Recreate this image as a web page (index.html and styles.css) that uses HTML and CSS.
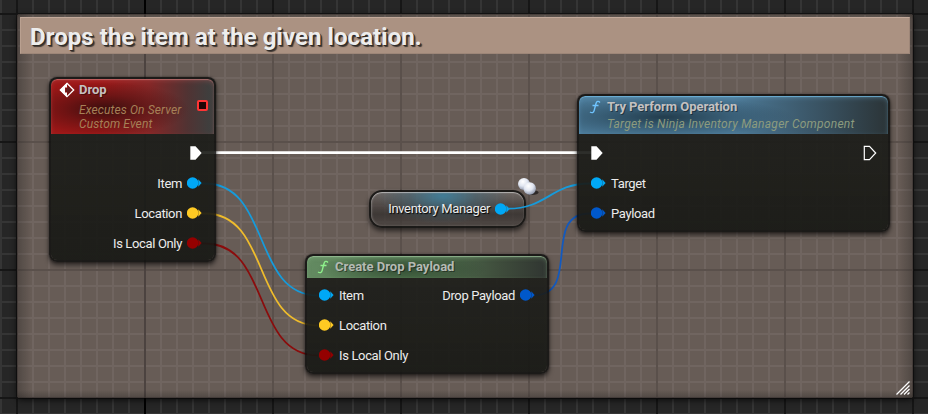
FILE: index.html
```html
<!DOCTYPE html>
<html lang="en">
<head>
<meta charset="utf-8">
<title>Drop event graph</title>
<link rel="stylesheet" href="styles.css">
</head>
<body>
<svg width="0" height="0" class="defs" aria-hidden="true">
  <defs>
    <symbol id="pin" viewBox="0 0 16 16"><circle cx="5.600" cy="8" r="5.800"/><path d="M11.300 4.300 14.600 8l-3.300 3.700z"/></symbol>
    <symbol id="exec" viewBox="0 0 16 16"><path d="M3.300 1.300h5.200L14.700 8l-6.200 6.700H3.300z"/></symbol>
    <symbol id="func" viewBox="0 0 12 14"><path d="M11 2.400C9.500.8 7.600 1 7 3.500L5.200 10.400C4.700 12.800 3 13.200 1 12M3.500 5.500H9.500" fill="none" stroke="currentColor" stroke-width="1.400"/></symbol>
    <radialGradient id="ball" cx=".4" cy=".3" r=".75"><stop offset="0" stop-color="#fff"/><stop offset=".5" stop-color="#e0e5f0"/><stop offset="1" stop-color="#858da2"/></radialGradient>
  </defs>
</svg>
<main class="graph">
  <section class="comment">
    <h1 class="comment-title">Drops the item at the given location.</h1>
    <svg class="grip" width="14" height="14" viewBox="0 0 14 14"><path d="M.5 13.500 13.500.5M4.500 13.500l9-9M8 13.500 13.500 8M11.500 13.500l2-2"/></svg>
  </section>

  <svg class="wires" width="928" height="414" viewBox="0 0 928 414">
    <path class="w-exec" d="M202 152.700H592"/>
    <path class="w-object" d="M201 183.500H205C271 183.500 252 295.500 318 295.500"/>
    <path class="w-vector" d="M201 213.500H205C271 213.500 252 325.500 318 325.500"/>
    <path class="w-bool" d="M201 243.500H205C271 243.500 252 355.500 318 355.500"/>
    <path class="w-struct" d="M533 295.500C583 295.500 540 213.500 590 213.500"/>
  </svg>

  <article class="node drop">
    <header class="head">
      <svg class="event-icon" width="16" height="16" viewBox="0 0 16 16"><path d="M8 1.300 14.700 8 8 14.700 1.300 8z" fill="none" stroke="#fff" stroke-width="1.300"/><path d="M8 1 1 8l7 7v-4.500H6v-5h2z" fill="#fff"/><path d="M7 6h2V3.700L12.500 8 9 12.300V10H7z" fill="#651d1d"/></svg>
      <div class="titles"><h2>Drop</h2><p>Executes On Server<br>Custom Event</p></div>
      <span class="delegate"></span>
    </header>
    <div class="pins">
      <div class="row out"><svg class="pin exec"><use href="#exec"/></svg></div>
      <div class="row out"><span>Item</span><svg class="pin object"><use href="#pin"/></svg></div>
      <div class="row out"><span>Location</span><svg class="pin vector"><use href="#pin"/></svg></div>
      <div class="row out"><span>Is Local Only</span><svg class="pin bool"><use href="#pin"/></svg></div>
    </div>
  </article>

  <article class="node inventory">
    <span>Inventory Manager</span><svg class="pin object"><use href="#pin"/></svg>
  </article>
  <svg class="wires" width="928" height="414" viewBox="0 0 928 414">
    <path class="w-object" d="M508 208.700C547 208.700 551 183.500 590 183.500"/>
  </svg>
  <svg class="balls" width="22" height="20" viewBox="0 0 22 20"><ellipse cx="15" cy="15.500" rx="6.500" ry="2.500" fill="#211d1b" opacity=".8"/><circle cx="7" cy="7" r="6" fill="url(#ball)"/><circle cx="12.700" cy="11.500" r="6.200" fill="url(#ball)"/></svg>

  <article class="node create">
    <header class="head"><svg class="func"><use href="#func"/></svg><h2>Create Drop Payload</h2></header>
    <div class="pins">
      <div class="row"><svg class="pin object"><use href="#pin"/></svg><span>Item</span><span class="push">Drop Payload</span><svg class="pin struct"><use href="#pin"/></svg></div>
      <div class="row"><svg class="pin vector"><use href="#pin"/></svg><span>Location</span></div>
      <div class="row"><svg class="pin bool"><use href="#pin"/></svg><span>Is Local Only</span></div>
    </div>
  </article>

  <article class="node perform">
    <header class="head"><svg class="func"><use href="#func"/></svg><div class="titles"><h2>Try Perform Operation</h2><p>Target is Ninja Inventory Manager Component</p></div></header>
    <div class="pins">
      <div class="row"><svg class="pin exec in"><use href="#exec"/></svg><svg class="pin exec open push"><use href="#exec"/></svg></div>
      <div class="row"><svg class="pin object"><use href="#pin"/></svg><span>Target</span></div>
      <div class="row"><svg class="pin struct"><use href="#pin"/></svg><span>Payload</span></div>
    </div>
  </article>
</main>
</body>
</html>
```
FILE: styles.css
```css
* { box-sizing: border-box; }
body { margin: 0; font-family: Roboto, "Liberation Sans", sans-serif; font-size: 13px; color: #ececec; }
h1, h2, p { margin: 0; }
svg { display: block; flex: none; }
.defs { position: absolute; }

/* Grid: 16px cells, heavier line every eighth cell, black origin axis */
.graph {
  position: relative; width: 928px; height: 414px; overflow: hidden;
  background-color: #262626;
  background-image:
    linear-gradient(#000, #000),
    linear-gradient(90deg, #161616 2px, transparent 2px),
    linear-gradient(#161616 2px, transparent 2px),
    linear-gradient(90deg, #353535 2px, transparent 2px),
    linear-gradient(#353535 2px, transparent 2px);
  background-size: 2px 414px, 128px 128px, 128px 128px, 16px 16px, 16px 16px;
  background-position: 144px 0, 16px 0, 0 13px, 0 0, 0 13px;
  background-repeat: no-repeat, repeat, repeat, repeat, repeat;
}

.comment {
  position: absolute; left: 17px; top: 14px; width: 896px; height: 384px;
  padding: 3px 3px 0; border-radius: 3px;
  background: #675c56;
  box-shadow: 0 2px 6px #000b;
}
.comment::before {
  content: ""; position: absolute; inset: 0; border-radius: 3px;
  background-image:
    linear-gradient(90deg, #1114, transparent 14px, transparent 882px, #1114),
    linear-gradient(#1113, transparent 5px, transparent 376px, #1114),
    linear-gradient(90deg, #4c4340 2px, transparent 2px),
    linear-gradient(90deg, #5a504b 2px, transparent 2px),
    linear-gradient(#5a504b 2px, transparent 2px),
    linear-gradient(90deg, #706560 2px, transparent 2px),
    linear-gradient(#706560 2px, transparent 2px);
  background-size: auto, auto, 2px 384px, 128px 128px, 128px 128px, 16px 16px, 16px 16px;
  background-position: 0 0, 0 0, 127px 0, -1px 0, 0 -1px, -1px 0, 0 -1px;
  background-repeat: no-repeat, no-repeat, no-repeat, repeat, repeat, repeat, repeat;
  box-shadow: inset 0 0 1px #211d1b;
}
.comment-title {
  position: relative; width: 890px; height: 37px; padding-left: 9px;
  background: #ab9282; border: 1px solid #9d8678; border-top-color: #c3aa9b; border-left-color: #b9a090;
  font-size: 24px; font-weight: 700; line-height: 38px; letter-spacing: .06px; color: #ededed;
  text-shadow: 1px 1px 0 #302b28, 2px 2px 1px #403833;
}
.grip { position: absolute; right: 3px; bottom: 3px; fill: none; stroke: #fff; stroke-width: 1.3; }

.wires { position: absolute; left: 0; top: 0; fill: none; stroke-width: 1.8; }
.w-exec { stroke: #fff; stroke-width: 2.8; }
.w-object { stroke: #169bdb; }
.w-vector { stroke: #efbc2c; }
.w-bool { stroke: #8b0c0c; }
.w-struct { stroke: #1359bd; }

.node {
  position: absolute; border: 2px solid #0e0e0dd9; border-radius: 8px; overflow: hidden;
  background: linear-gradient(#1e1f1be8, #181915ee);
  background-clip: padding-box;
  box-shadow: 0 3px 5px #0009, 0 0 2px #0008;
}
.drop { left: 49px; top: 77px; width: 167px; height: 185px; }
.create { left: 305px; top: 254px; width: 244px; height: 120px; }
.perform { left: 577px; top: 94px; width: 313px; height: 138px; }

.head { display: flex; }
.head h2 { font-size: 13px; font-weight: 700; line-height: 18px; color: #c4c1c1; text-shadow: 1px 1px 0 #0006; white-space: nowrap; }
.head p { font-size: 12px; font-style: italic; line-height: 14px; letter-spacing: .24px; white-space: nowrap; }

.drop .head {
  height: 55px; padding: 2px 6px 0 9px; border-radius: 6px 6px 0 0;
  background:
    radial-gradient(ellipse 84px 27px at 54px 30px, #300d0de6, #4a101088 50%, transparent),
    linear-gradient(90deg, #9c1717 30%, #842626 60%, #503333 84%, #3b4140);
  box-shadow: inset 0 1px 1px #d6888899, inset 0 2px 5px #c55b5b55;
}
.drop .titles { margin-left: 3px; }
.event-icon { margin-top: 1px; margin-left: -1px; }
.drop h2 { margin-left: 1px; }
.drop p { margin: 4px 0 0 1px; letter-spacing: .12px; color: #a68057; }
.delegate { width: 11px; height: 11px; margin: 19px 0 0 auto; border: 2px solid #ff3434; border-radius: 2px; background: #210505; }

.create .head {
  height: 22px; padding-left: 10px; align-items: center; border-radius: 6px 6px 0 0;
  background:
    radial-gradient(ellipse 85px 17px at 95px 13px, #263c27bb, transparent),
    linear-gradient(90deg, #638a61, #567b54 45%, #3f4d3c 80%, #303531);
  box-shadow: inset 0 1px 1px #a6cda5aa, inset 0 2px 4px #8dbe8b55;
}
.create .func { color: #8ef08b; }
.create h2 { margin-left: 6px; color: #b4bab3; }

.perform .head {
  height: 38px; padding: 2px 0 0 10px; border-radius: 6px 6px 0 0;
  background:
    radial-gradient(ellipse 130px 20px at 85px 21px, #1d3442dd, #24405177 50%, transparent),
    linear-gradient(90deg, #4a7896, #4b7896 50%, #38505f 80%, #2b3437);
  box-shadow: inset 0 1px 1px #75bbe4cc, inset 0 2px 5px #74b4d855;
}
.perform .func { margin-top: 2px; color: #6fc4ff; }
.perform .titles { margin-left: 6px; }
.perform h2 { letter-spacing: -.04px; }
.perform p { margin-top: 1px; color: #8c9b7e; }
.func { width: 12px; height: 14px; }

.pins { padding: 4px 11px 0 12px; }
.create .pins { padding-top: 2px; }
.row { display: flex; align-items: center; height: 30px; white-space: nowrap; }
.row span, .inventory span { letter-spacing: -.35px; }
.row.out { justify-content: flex-end; }
.row.out span { margin-right: 5px; }
.row > .pin + span { margin-left: 4px; }
.row > span.push, .row > .push { margin-left: auto; }
.row .push + .pin { margin-left: 5px; }
.pin { width: 16px; height: 16px; overflow: visible; }
.object { fill: #00a8f6; }
.vector { fill: #ffca23; }
.bool { fill: #940000; }
.struct { fill: #0058cb; }
.exec { fill: #fff; }
.exec.in { margin-left: -3px; }
.exec.open { fill: none; stroke: #fff; stroke-width: 1.2; }

.inventory {
  left: 369px; top: 190px; width: 157px; height: 38px; border-radius: 13px;
  display: flex; align-items: center; justify-content: flex-end; padding: 0 13px 1px 0;
  background:
    radial-gradient(ellipse 66px 28px at 72px 4px, #3c819fdd, #3b677a77 50%, transparent),
    linear-gradient(#716c6abb, #47413fc0 40%, #34302ecc 65%, #48413ecc);
  background-clip: padding-box;
  box-shadow: 0 3px 5px #0009, inset 0 1px 1px #ddd9, inset 1px 0 2px #aaa6;
}
.inventory span { margin-right: 5px; text-shadow: 1px 1px 1px #000; white-space: nowrap; }
.balls { position: absolute; left: 517px; top: 177px; }
```
